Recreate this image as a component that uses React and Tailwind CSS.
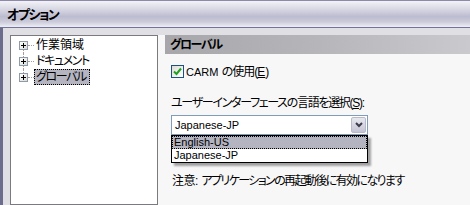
const jp = "font-['Liberation_Sans','Noto_Sans_CJK_JP',sans-serif] [font-feature-settings:'palt']"

function PlusBox() {
  return (
    <span className="relative flex h-[9px] w-[9px] items-center justify-center border border-[#8e9aa8] bg-gradient-to-br from-white to-[#dcdcd6]">
      <span className="absolute h-px w-[5px] bg-black" />
      <span className="absolute h-[5px] w-px bg-black" />
    </span>
  )
}

function TreeRow({ label, selected, first, last, tight }) {
  return (
    <div className="relative flex h-[16px] items-center pl-[8px]">
      <span
        className={
          'absolute left-[12px] w-0 border-l border-dotted border-[#a0a0a0] ' +
          (first ? 'top-[8px] bottom-0' : last ? 'top-0 h-[8px]' : 'top-0 bottom-0')
        }
      />
      <PlusBox />
      <span className="h-0 w-[6px] border-t border-dotted border-[#a0a0a0]" />
      <span
        className={
          'flex h-[16px] items-center px-px text-[12px] leading-none text-black ' +
          (tight ? 'tracking-[-1.4px] ' : '') +
          (selected ? 'border border-dotted border-black bg-[#b4b5c0] pr-[3px]' : 'border border-transparent')
        }
      >
        {label}
      </span>
    </div>
  )
}

export default function App() {
  return (
    <div className={'h-[205px] w-[470px] overflow-hidden bg-[#e0dfe3] text-black ' + jp}>
      <div className="flex h-[28px] items-center border-t border-b border-t-[#8c8aa8] border-b-[#72729a] bg-[linear-gradient(#f2f2f7_0%,#d9d9e5_30%,#bcbcd0_60%,#cbcbda_80%,#eeeef4_100%)] pl-[7px]">
        <span className="text-[13px] font-bold leading-none tracking-[-1.5px]">オプション</span>
      </div>
      <div className="flex h-[177px] border-l-[3px] border-[#6c6c8c] pt-[7px]">
        <div className="pl-[7px]">
          <div className="h-full w-[148px] border border-[#7a7a80] bg-white pt-[1px]">
            <TreeRow label="作業領域" first />
            <TreeRow label="ドキュメント" tight />
            <TreeRow label="グローバル" selected last tight />
          </div>
        </div>
        <div className="flex flex-1 flex-col bg-[#f7f7f8] pl-[7px]">
          <div className="flex h-[19px] items-center bg-[linear-gradient(90deg,#a7a7ab,#b6b5ba_50%,#cac9ce)] pl-[5px]">
            <span className="text-[12px] font-bold leading-none tracking-[-1.4px]">グローバル</span>
          </div>
          <div className="flex flex-col pl-[6px]">
            <div className="mt-[11px] flex h-[13px] items-center gap-[2px]">
              <span className="flex h-[13px] w-[13px] items-center justify-center border border-[#1c5180] bg-gradient-to-br from-[#dcdcd7] to-white">
                <svg width="9" height="9" viewBox="0 0 9 9">
                  <path d="M1 4.5 L3.5 7 L8 1.5" fill="none" stroke="#21a121" strokeWidth="2" />
                </svg>
              </span>
              <span className="text-[12px] leading-none">
                <span className="text-[11px]">CARM</span>{' '}
                <span className="tracking-[-1px]">の使用(</span>
                <span className="underline">E</span>)
              </span>
            </div>
            <div className="mt-[19px] text-[12px] leading-none tracking-[-1.3px]">
              ユーザーインターフェースの言語を選択(<span className="underline">S</span>):
            </div>
            <div className="mt-[6px] w-[197px]">
              <div className="flex h-[20px] items-center border border-[#7f9db9] bg-white pr-px pl-[3px]">
                <span className="flex-1 text-[11px] leading-none">Japanese-JP</span>
                <span className="flex h-[16px] w-[15px] items-center justify-center rounded-[2px] border border-[#b9b9cc] bg-gradient-to-b from-[#e8e8f0] to-[#c4c4d4]">
                  <svg width="8" height="6" viewBox="0 0 8 6">
                    <path d="M1 1 L4 4 L7 1" fill="none" stroke="#3c3c4c" strokeWidth="2" />
                  </svg>
                </span>
              </div>
              <div className="border border-black bg-white shadow-[3px_3px_2px_rgba(0,0,0,0.35)]">
                <div className="flex h-[13px] items-center border border-dotted border-black bg-[#b3b4c0] pl-px text-[11px] leading-none">
                  English-US
                </div>
                <div className="flex h-[13px] items-center pl-[2px] text-[11px] leading-none">Japanese-JP</div>
              </div>
            </div>
            <div className="mt-[12px] pl-px text-[12px] leading-none">
              <span className="tracking-[-0.5px]">注意</span>
              <span className="mr-[3px]">:</span>
              <span className="tracking-[-1.6px]">アプリケーションの再起動後に有効になります</span>
            </div>
          </div>
        </div>
      </div>
    </div>
  )
}
